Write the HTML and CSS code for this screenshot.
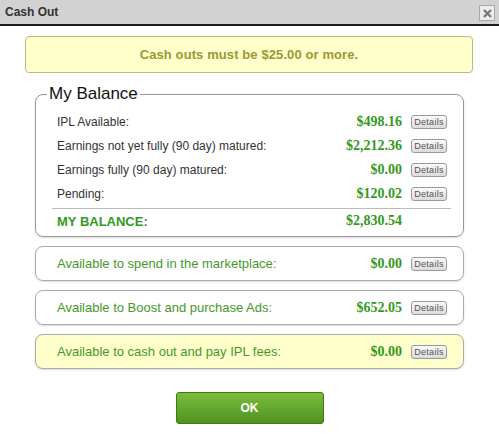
FILE: index.html
```html
<!DOCTYPE html>
<html>
<head>
<meta charset="utf-8">
<link rel="stylesheet" href="styles.css">
</head>
<body>
<div class="titlebar">
  <span class="title">Cash Out</span>
  <span class="close">
    <svg width="11" height="11" viewBox="0 0 11 11"><path d="M2 2 L9 9 M9 2 L2 9" stroke="#777" stroke-width="2.4"/></svg>
  </span>
</div>
<div class="content">
  <div class="notice">Cash outs must be $25.00 or more.</div>
  <fieldset class="balance">
    <legend>My Balance</legend>
    <div class="row"><span class="label">IPL Available:</span><span class="value">$498.16</span><span class="details">Details</span></div>
    <div class="row"><span class="label">Earnings not yet fully (90 day) matured:</span><span class="value">$2,212.36</span><span class="details">Details</span></div>
    <div class="row"><span class="label">Earnings fully (90 day) matured:</span><span class="value">$0.00</span><span class="details">Details</span></div>
    <div class="row"><span class="label">Pending:</span><span class="value">$120.02</span><span class="details">Details</span></div>
    <div class="row total"><span class="label">MY BALANCE:</span><span class="value">$2,830.54</span><span class="spacer"></span></div>
  </fieldset>
  <div class="card"><span class="label">Available to spend in the marketplace:</span><span class="value">$0.00</span><span class="details">Details</span></div>
  <div class="card"><span class="label">Available to Boost and purchase Ads:</span><span class="value">$652.05</span><span class="details">Details</span></div>
  <div class="card yellow"><span class="label">Available to cash out and pay IPL fees:</span><span class="value">$0.00</span><span class="details">Details</span></div>
  <div class="actions"><button class="ok">OK</button></div>
</div>
</body>
</html>
```
FILE: styles.css
```css
html, body {
  margin: 0;
  padding: 0;
  background: #fff;
  font-family: "Liberation Sans", Arial, sans-serif;
}
.titlebar {
  height: 24px;
  background: #d2d2d2;
  border-bottom: 2px solid #1a1a1a;
  display: flex;
  align-items: center;
  justify-content: space-between;
  padding: 0 4px 0 5px;
}
.title {
  font-size: 12px;
  font-weight: bold;
  color: #333;
}
.close {
  width: 14px;
  height: 14px;
  border: 1px solid #a8a8a8;
  background: #ececec;
  display: flex;
  align-items: center;
  justify-content: center;
  margin-top: 2px;
}
.content {
  display: flex;
  flex-direction: column;
}
.notice {
  margin: 10px 26px 0 25px;
  height: 35px;
  background: #ffffcc;
  border: 1px solid #bdbd7a;
  border-radius: 4px;
  display: flex;
  align-items: center;
  justify-content: center;
  color: #999933;
  font-size: 13px;
  font-weight: bold;
  letter-spacing: 0.1px;
}
.balance {
  margin: 11px 35px 0 35px;
  padding: 6px 12px 3px 16px;
  border: 1px solid #999;
  border-radius: 8px;
  box-shadow: 0 1px 2px rgba(0,0,0,0.15);
}
.balance legend {
  font-size: 17px;
  color: #111;
  padding: 0 2px;
  margin-left: -5px;
}
.row {
  display: flex;
  align-items: center;
  height: 24px;
  padding: 0 4px 0 5px;
  font-size: 12px;
  color: #333;
}
.row .label, .card .label {
  flex: 1;
}
.value {
  font-family: "Liberation Serif", "Times New Roman", serif;
  font-weight: bold;
  font-size: 14px;
  color: #339922;
}
.details {
  margin-left: 9px;
  width: 34px;
  height: 12px;
  border: 1px solid #999;
  border-radius: 3px;
  background: linear-gradient(#fafafa, #dcdcdc);
  font-size: 9px;
  letter-spacing: 0.3px;
  color: #555;
  display: flex;
  align-items: center;
  justify-content: center;
}
.spacer {
  width: 45px;
}
.row.total {
  border-top: 1px solid #bbb;
  margin-top: 2px;
  height: 24px;
}
.row.total .label {
  color: #339922;
  font-weight: bold;
  font-size: 13px;
}
.card {
  margin: 9px 35px 0 35px;
  height: 33px;
  border: 1px solid #aaa;
  border-radius: 8px;
  box-shadow: 0 1px 2px rgba(0,0,0,0.15);
  display: flex;
  align-items: center;
  padding: 0 16px 0 21px;
  font-size: 13px;
  color: #44992a;
}
.card.yellow {
  background: #ffffcc;
  margin-top: 9px;
}
.actions {
  display: flex;
  justify-content: center;
  margin-top: 23px;
}
.ok {
  width: 148px;
  height: 32px;
  border: 1px solid #3d7a12;
  border-radius: 3px;
  background: linear-gradient(#7cbd3c, #4f9320);
  color: #fff;
  font-family: "Liberation Sans", Arial, sans-serif;
  font-weight: bold;
  font-size: 12px;
  padding: 0;
}
```
